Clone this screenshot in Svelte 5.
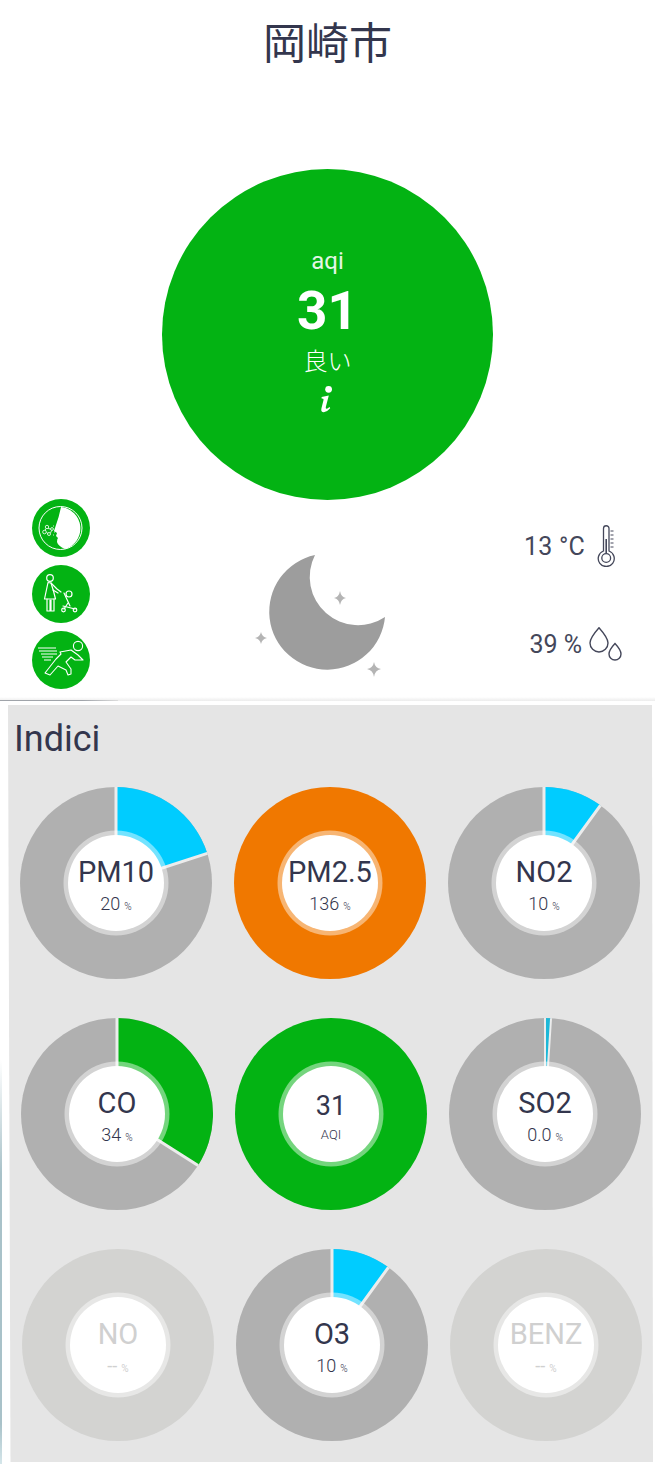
<script>
  const size = 192, c = 96, r = 96;
  function pt(p) {
    const a = (p / 100) * 2 * Math.PI;
    return [(c + r * Math.sin(a)).toFixed(2), (c - r * Math.cos(a)).toFixed(2)];
  }
  function sector(p) {
    const [x, y] = pt(p);
    return `M${c} ${c}L${c} 0A${r} ${r} 0 ${p > 50 ? 1 : 0} 1 ${x} ${y}Z`;
  }
  function edges(p) {
    const [x, y] = pt(p);
    return `M${c} ${c}L${c} 0M${c} ${c}L${x} ${y}`;
  }
  const rows = [
    { cls: 'r1', items: [
      { name: 'PM10', val: '20', unit: '%', pct: 20, col: '#00ccff', base: '#b0b0b0' },
      { name: 'PM2.5', val: '136', unit: '%', pct: 0, col: '', base: '#f07800' },
      { name: 'NO2', val: '10', unit: '%', pct: 10, col: '#00ccff', base: '#b0b0b0' }
    ]},
    { cls: 'r2', items: [
      { name: 'CO', val: '34', unit: '%', pct: 34, col: '#03b313', base: '#b0b0b0' },
      { name: '31', val: 'AQI', unit: '', pct: 0, col: '', base: '#03b313', aqi: true },
      { name: 'SO2', val: '0.0', unit: '%', pct: 1, col: '#1cb8d8', base: '#b0b0b0', thin: true }
    ]},
    { cls: 'r3', items: [
      { name: 'NO', val: '--', unit: '%', pct: 0, col: '', base: '#d3d3d1', off: true },
      { name: 'O3', val: '10', unit: '%', pct: 10, col: '#00ccff', base: '#b0b0b0' },
      { name: 'BENZ', val: '--', unit: '%', pct: 0, col: '', base: '#d3d3d1', off: true }
    ]}
  ];
</script>

<div class="page">
  <h1 class="title">岡崎市</h1>

  <div class="hero">
    <div class="hero-text">
      <div class="aqi-label">aqi</div>
      <div class="aqi-num">31</div>
      <div class="aqi-word">良い</div>
      <svg class="info" width="14" height="29" viewBox="0 0 14 28" aria-hidden="true">
        <circle cx="8.6" cy="3.8" r="3.4" fill="#fff"/>
        <path d="M1.6 11.4 L8.8 10 L5.8 21.6 Q5.4 23.6 7 23.2 L9.6 21.6 L10.2 22.8 Q7 26.6 3.8 26.8 Q0.6 26.8 1.4 23 L3.6 14.2 Q3.8 13 1.6 13 Z" fill="#fff"/>
      </svg>
    </div>
  </div>

  <div class="status">
    <div class="badges">
      <svg class="badge" viewBox="0 0 58 58" aria-hidden="true">
        <circle cx="29" cy="29" r="29" fill="#03b313"/>
        <circle cx="28.5" cy="29" r="21.5" fill="none" stroke="#fff" stroke-width="1"/>
        <path d="M29 8 A21.5 21.5 0 0 1 33 50 Q26 47 25 43 Q25 40 26 39 L24 37 L25 34 L22 32 L24 26 Q27 18 29 8 Z" fill="#fff"/>
        <g fill="none" stroke="#fff" stroke-width="0.8">
          <circle cx="15" cy="28" r="1.7"/><circle cx="20" cy="30" r="1.4"/><circle cx="12.5" cy="33" r="1.8"/><circle cx="17" cy="35" r="1.5"/>
          <path d="M16 29.5 L18.6 30 M14 29.5 L13 31.5 M14.5 33.5 L16 34.5 M18.5 34 L19.6 31.5"/>
          <path d="M21 27h1M22 33h1M21 36h1"/>
        </g>
      </svg>
      <svg class="badge" viewBox="0 0 58 58" aria-hidden="true">
        <circle cx="29" cy="29" r="29" fill="#03b313"/>
        <g fill="none" stroke="#fff" stroke-width="1.2" stroke-linejoin="round" stroke-linecap="round">
          <circle cx="18" cy="13" r="3.3"/>
          <path d="M16 17.5 L12.5 34 H23.5 L21.5 26 L19 18 Z"/>
          <path d="M19 18 L25 24 L29 27 M21 25 L26 28"/>
          <path d="M15 34 V46 H18 V35 M19 35 V46 H22 V34"/>
          <circle cx="37" cy="29" r="3"/>
          <path d="M32 28 L38 41 M31 41 L43 44 M36 38 L32 44"/>
          <circle cx="31.5" cy="45" r="1.8"/><circle cx="43" cy="45" r="1.8"/>
        </g>
      </svg>
      <svg class="badge" viewBox="0 0 58 58" aria-hidden="true">
        <circle cx="29" cy="29" r="29" fill="#03b313"/>
        <g fill="none" stroke="#fff" stroke-width="1.1" stroke-linejoin="round" stroke-linecap="round">
          <circle cx="46" cy="15" r="4.6"/>
          <path d="M28 21 L39 19 L46 24 L51 29 L43 29 L39 26 L34 31 L39 38 L39 43 L36 44 L34 39 L26 35 L18 44 L13 42 L24 28 L29 23 Z"/>
        </g>
        <g stroke="#fff" stroke-width="1.2">
          <path d="M6 17 H24 M7 20 H25 M9 23 H25 M10 26 H21 M12 29 H19"/>
        </g>
      </svg>
    </div>

    <svg class="moon" width="140" height="135" viewBox="250 545 140 135" aria-hidden="true">
      <path d="M315 555 A58 58 0 1 0 385 617 A48.3 48.3 0 0 1 315 555 Z" fill="#9d9d9d"/>
      <path d="M340 591 Q341 597 346 598 Q341 599 340 605 Q339 599 334 598 Q339 597 340 591 Z" fill="#b4b4b4"/>
      <path d="M261 632 Q262 637 267 638 Q262 639 261 644 Q260 639 255 638 Q260 637 261 632 Z" fill="#b4b4b4"/>
      <path d="M374 662 Q375 668 381 669 Q375 670 374 677 Q373 670 367 669 Q373 668 374 662 Z" fill="#b4b4b4"/>
    </svg>

    <div class="weather">
      <div class="w-row temp">
        <span>13 °C</span>
        <svg width="20" height="42" viewBox="0 0 20 42" fill="none" stroke="#44475a" stroke-width="1.3" aria-hidden="true">
          <path d="M7.5 26 V3.5 A2.75 2.75 0 0 1 13 3.5 V26 A8 8 0 1 1 7.5 26 Z"/>
          <circle cx="10.2" cy="33" r="4.4"/>
          <path d="M10.2 14 V28" stroke-width="1.6"/>
          <path d="M14.5 6h3M14.5 10h3M14.5 14h3M14.5 18h3M14.5 22h3" stroke-width="1"/>
        </svg>
      </div>
      <div class="w-row hum">
        <span>39 %</span>
        <svg width="34" height="34" viewBox="0 0 34 34" fill="none" stroke="#44475a" stroke-width="1.4" aria-hidden="true">
          <path d="M10 0.8 Q19 11 19 16 A9 9 0 0 1 1 16 Q1 11 10 0.8 Z"/>
          <path d="M26 16.5 Q32 23 32 27 A6 6 0 0 1 20 27 Q20 23 26 16.5 Z"/>
        </svg>
      </div>
    </div>
  </div>

  <div class="divider"></div>

  <section class="panel">
    <h2 class="heading">Indici</h2>
    {#each rows as row}
      <div class="row {row.cls}">
        {#each row.items as d}
          <div class="donut" class:off={d.off} class:aqi={d.aqi}>
            <svg width={size} height={size} viewBox="0 0 192 192" aria-hidden="true">
              <circle cx="96" cy="96" r="96" fill={d.base}/>
              {#if d.pct}
                <path d={sector(d.pct)} fill={d.col}/>
                <path d={edges(d.pct)} fill="none" stroke="#ececec" stroke-width={d.thin ? 2 : 3}/>
              {/if}
              <circle cx="96" cy="96" r="52.5" fill="#fff" fill-opacity="0.45"/>
              <circle cx="96" cy="96" r="48" fill="#fff"/>
            </svg>
            <div class="label">
              <span class="name">{d.name}</span>
              <span class="val">{d.val}{#if d.unit}<small>{d.unit}</small>{/if}</span>
            </div>
          </div>
        {/each}
      </div>
    {/each}
  </section>
</div>

<style>
  :global(body) { margin: 0; background: #fff; }
  .page {
    position: relative;
    width: 655px;
    height: 1464px;
    overflow: hidden;
    font-family: Roboto, "Noto Sans CJK JP", sans-serif;
    color: #2c2f4a;
  }
  .page::before {
    content: "";
    position: absolute;
    left: 0;
    top: 1060px;
    bottom: 0;
    width: 2px;
    background: linear-gradient(#ffffff, #a9c2c9 28%, #a9c2c9 90%, #d5e6ea);
  }
  .title {
    margin: 0;
    height: 169px;
    padding-top: 12px;
    box-sizing: border-box;
    text-align: center;
    font: 400 43px/56px "Noto Sans CJK JP", sans-serif;
    color: #33364d;
  }
  .hero {
    width: 331px;
    height: 331px;
    margin-left: 162px;
    border-radius: 50%;
    background: #03b313;
    color: #fff;
    display: flex;
    justify-content: center;
  }
  .hero-text {
    display: flex;
    flex-direction: column;
    align-items: center;
    padding-top: 77px;
  }
  .aqi-label { font-size: 24px; line-height: 30px; color: #e4f6e6; }
  .aqi-num { font-size: 53px; line-height: 62px; font-weight: 700; margin-top: 4px; }
  .aqi-word { font: 300 24px/34px "Noto Sans CJK JP", sans-serif; margin-top: 1px; }
  .info { margin-top: 8px; }
  .status {
    display: flex;
    height: 201px;
    box-sizing: border-box;
    padding-left: 32px;
    margin-top: -1px;
  }
  .badges { display: flex; flex-direction: column; gap: 8px; width: 58px; }
  .badge { width: 58px; height: 58px; display: block; }
  .moon { margin: 46px 0 0 160px; }
  .weather {
    margin-left: auto;
    padding-right: 32px;
    display: flex;
    flex-direction: column;
    align-items: flex-end;
    font-size: 25px;
    color: #44475a;
  }
  .w-row { display: flex; align-items: center; }
  .temp { margin-top: 26px; height: 42px; gap: 11px; padding-right: 7px; }
  .temp span { letter-spacing: 0.2px; }
  .hum { margin-top: 60px; height: 34px; gap: 7px; }
  .divider {
    position: relative;
    height: 4px;
    background: linear-gradient(#fff, #ececec);
    margin-top: -3px;
  }
  .divider::before {
    content: "";
    position: absolute;
    left: 0;
    bottom: 0;
    width: 118px;
    height: 1px;
    background: linear-gradient(90deg, #a0a4aa 0, #a0a4aa 70%, #dcdcdc 100%);
  }
  .panel {
    width: 645px;
    height: 757px;
    margin: 4px 0 0 8px;
    background: #e5e5e5;
    box-sizing: border-box;
    overflow: hidden;
    clip-path: polygon(0 0, 644px 0, 100% 100%, 2.5px 100%);
  }
  .heading {
    margin: 0;
    padding: 12px 0 0 6px;
    height: 82px;
    box-sizing: border-box;
    font-size: 36px;
    line-height: 44px;
    font-weight: 400;
    color: #33364d;
  }
  .row { display: flex; gap: 22px; height: 231px; }
  .r1 { padding-left: 12px; }
  .r2 { padding-left: 13px; }
  .r3 { padding-left: 14px; }
  .donut { position: relative; width: 192px; height: 192px; }
  .donut svg { display: block; }
  .label {
    position: absolute;
    left: 0;
    right: 0;
    top: 66px;
    display: flex;
    flex-direction: column;
    align-items: center;
    color: #33364d;
  }
  .name { font-size: 29px; line-height: 38px; }
  .val { font-size: 18px; line-height: 24px; margin-top: 1px; color: #33364d; font-weight: 300; }
  .val small { font-size: 10px; margin-left: 4px; }
  .aqi .label { top: 69px; }
  .aqi .name { font-size: 27px; }
  .aqi .val { font-size: 13px; margin-top: -2px; font-weight: 300; }
  .off .label { color: #d0d0d0; }
  .off .val { color: #d0d0d0; font-weight: 400; }
</style>
